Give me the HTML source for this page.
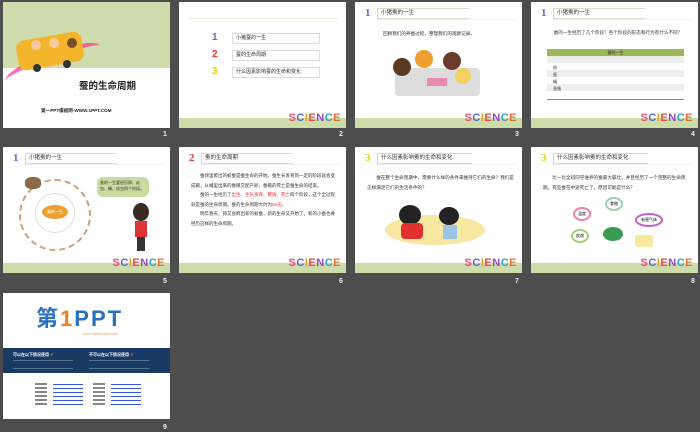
<!DOCTYPE html>
<html><head><meta charset="utf-8"><style>
*{margin:0;padding:0;box-sizing:border-box}
body{width:700px;height:432px;background:#4d4d4d;position:relative;overflow:hidden;font-family:"Liberation Sans","Noto Sans CJK SC",sans-serif}
.s{position:absolute;width:167px;height:126px;background:#fff;overflow:hidden}
.n{position:absolute;color:#eee;font-size:7px;font-weight:bold}
.band{position:absolute;left:0;bottom:0;width:100%;height:10px;background:#cddcaa}
.sci{position:absolute;right:5px;bottom:4px;font-size:11px;font-weight:bold;letter-spacing:0.5px;font-family:"Liberation Sans",sans-serif}
.tb{position:absolute;left:22px;top:6px;width:92px;height:11px;border:1px solid #dcdcc8;border-right:none;font-size:5.5px;line-height:9px;padding-left:3px;color:#333;background:#fff}
.tl{position:absolute;left:22px;top:17px;width:138px;height:1px;background:#eee}
.num{position:absolute;left:10px;top:5px;font-size:11px;font-weight:bold;font-family:"Liberation Serif",serif}
.t{position:absolute;font-size:4.6px;color:#333;line-height:9px}
</style></head><body>

<!-- slide 1 -->
<div class="s" style="left:3px;top:2px">
<div style="position:absolute;left:0;top:0;width:100%;height:66px;background:#cfdcae"></div>
<div style="position:absolute;left:0;top:50px;width:100px;height:22px;border-radius:50%;border-top:6px solid #f38;transform:rotate(-20deg);opacity:.7"></div>
<div style="position:absolute;left:14px;top:34px;width:66px;height:30px;background:#f3b52c;border-radius:8px;transform:rotate(-10deg)"></div>
<div style="position:absolute;left:28px;top:38px;width:10px;height:10px;background:#f8c9a0;border-radius:50%"></div>
<div style="position:absolute;left:46px;top:36px;width:10px;height:10px;background:#f8c9a0;border-radius:50%"></div>
<div style="position:absolute;left:64px;top:36px;width:10px;height:10px;background:#7b4a2a;border-radius:50%"></div>
<div style="position:absolute;left:30px;top:62px;width:8px;height:8px;background:#333;border-radius:50%"></div>
<div style="position:absolute;left:60px;top:58px;width:8px;height:8px;background:#333;border-radius:50%"></div>
<div style="position:absolute;left:76px;top:76px;font-size:9.5px;font-weight:bold;color:#222">蚕的生命周期</div>
<div style="position:absolute;left:38px;top:106px;font-size:4.6px;font-weight:bold;color:#222">第一PPT模板网-WWW.1PPT.COM</div>
</div>
<div class="n" style="left:163px;top:131px">1</div>

<!-- slide 2 -->
<div class="s" style="left:179px;top:2px">
<div style="position:absolute;left:9px;top:16px;width:150px;height:1px;background:#ececdf"></div>
<div style="position:absolute;left:33px;top:30px;font-size:10px;font-weight:bold;color:#6a5fd8">1</div>
<div style="position:absolute;left:33px;top:47px;font-size:10px;font-weight:bold;color:#e33">2</div>
<div style="position:absolute;left:33px;top:64px;font-size:10px;font-weight:bold;color:#ec0">3</div>
<div class="t" style="left:53px;top:31px;width:88px;height:11px;border:1px solid #ddd;padding-left:3px;line-height:9px;font-size:5px">小猪蚕的一生</div>
<div class="t" style="left:53px;top:48px;width:88px;height:11px;border:1px solid #ddd;padding-left:3px;line-height:9px;font-size:5px">蚕的生命周期</div>
<div class="t" style="left:53px;top:65px;width:88px;height:11px;border:1px solid #ddd;padding-left:3px;line-height:9px;font-size:5px">什么因素影响蚕的生命和变化</div>
<div class="band"></div>
<div class="sci"><span style="color:#e4527a">S</span><span style="color:#5b6ad0">C</span><span style="color:#e9a020">I</span><span style="color:#e05050">E</span><span style="color:#8a50c0">N</span><span style="color:#40a0c8">C</span><span style="color:#e07030">E</span></div>
</div>
<div class="n" style="left:339px;top:131px">2</div>

<!-- slide 3 -->
<div class="s" style="left:355px;top:2px">
<div class="num" style="color:#6a5fd8">1</div><div class="tb">小猪蚕的一生</div><div class="tl"></div>
<div class="t" style="left:28px;top:27px">回顾我们的养蚕过程，整理我们的观察记录。</div>
<div style="position:absolute;left:40px;top:66px;width:85px;height:28px;background:#ddd;border-radius:4px"></div>
<div style="position:absolute;left:38px;top:56px;width:18px;height:18px;background:#5b3a22;border-radius:50%"></div>
<div style="position:absolute;left:60px;top:48px;width:18px;height:18px;background:#f0a030;border-radius:50%"></div>
<div style="position:absolute;left:88px;top:50px;width:18px;height:18px;background:#6a3a2a;border-radius:50%"></div>
<div style="position:absolute;left:100px;top:66px;width:16px;height:16px;background:#f4d060;border-radius:50%"></div>
<div style="position:absolute;left:72px;top:76px;width:20px;height:8px;background:#e88ab0"></div>
<div class="band"></div>
<div class="sci"><span style="color:#e4527a">S</span><span style="color:#5b6ad0">C</span><span style="color:#e9a020">I</span><span style="color:#e05050">E</span><span style="color:#8a50c0">N</span><span style="color:#40a0c8">C</span><span style="color:#e07030">E</span></div>
</div>
<div class="n" style="left:515px;top:131px">3</div>

<!-- slide 4 -->
<div class="s" style="left:531px;top:2px">
<div class="num" style="color:#6a5fd8">1</div><div class="tb">小猪蚕的一生</div><div class="tl"></div>
<div class="t" style="left:18px;top:26px;width:145px">　蚕的一生经历了几个阶段？各个阶段的形态和行为有什么不同？</div>
<div style="position:absolute;left:16px;top:47px;width:137px;height:7px;background:#9bb858;font-size:4px;text-align:center;color:#222;line-height:7px">蚕的一生</div>
<div style="position:absolute;left:16px;top:54px;width:137px;height:7px;background:#eee"></div>
<div style="position:absolute;left:16px;top:68px;width:137px;height:7px;background:#eee"></div>
<div style="position:absolute;left:16px;top:82px;width:137px;height:7px;background:#eee"></div>
<div style="position:absolute;left:16px;top:97px;width:137px;height:1px;background:#888"></div>
<div class="t" style="left:22px;top:62px;line-height:7px;font-size:4px">卵<br>蚕<br>蛹<br>蚕蛾</div>
<div class="band"></div>
<div class="sci"><span style="color:#e4527a">S</span><span style="color:#5b6ad0">C</span><span style="color:#e9a020">I</span><span style="color:#e05050">E</span><span style="color:#8a50c0">N</span><span style="color:#40a0c8">C</span><span style="color:#e07030">E</span></div>
</div>
<div class="n" style="left:691px;top:131px">4</div>

<!-- slide 5 -->
<div class="s" style="left:3px;top:147px">
<div class="num" style="color:#6a5fd8">1</div><div class="tb">小猪蚕的一生</div><div class="tl"></div>
<div style="position:absolute;left:16px;top:32px;width:72px;height:72px;border:2px dashed #c9a27a;border-radius:50%"></div>
<div style="position:absolute;left:32px;top:46px;width:40px;height:40px;border:1px solid #ddd;border-radius:50%"></div>
<div style="position:absolute;left:39px;top:58px;width:26px;height:14px;background:#e8a030;border-radius:50%;font-size:4px;color:#fff;text-align:center;line-height:14px">蚕的一生</div>
<div style="position:absolute;left:22px;top:30px;width:16px;height:12px;background:#8a6a4a;border-radius:40%"></div>
<div style="position:absolute;left:94px;top:30px;width:52px;height:20px;background:#c9dca0;border-radius:6px;font-size:4px;line-height:6px;padding:3px;color:#333">蚕的一生要经历卵、幼虫、蛹、成虫四个阶段。</div>
<div style="position:absolute;left:130px;top:56px;width:16px;height:18px;background:#3a2a22;border-radius:50%"></div>
<div style="position:absolute;left:132px;top:74px;width:12px;height:16px;background:#d33"></div>
<div style="position:absolute;left:134px;top:90px;width:8px;height:14px;background:#333"></div>
<div class="band"></div>
<div class="sci"><span style="color:#e4527a">S</span><span style="color:#5b6ad0">C</span><span style="color:#e9a020">I</span><span style="color:#e05050">E</span><span style="color:#8a50c0">N</span><span style="color:#40a0c8">C</span><span style="color:#e07030">E</span></div>
</div>
<div class="n" style="left:163px;top:278px">5</div>

<!-- slide 6 -->
<div class="s" style="left:179px;top:147px">
<div class="num" style="color:#e33">2</div><div class="tb">蚕的生命周期</div><div class="tl"></div>
<div class="t" style="left:12px;top:24px;width:148px;line-height:9.5px;font-size:4.5px">　　蚕卵里孵出的蚁蚕是蚕生命的开始。蚕生长发育到一定的阶段就会变成蛾，从蛹里出来的蚕蛾交配产卵，蚕蛾的死亡是蚕生命的结束。<br>　　蚕的一生经历了<span style="color:#e33">出生、生长发育、繁殖、死亡</span>四个阶段，这个全过程就是蚕的生命周期。蚕的生命周期大约为<span style="color:#e33">56天</span>。<br>　　明年春天，卵又会孵出新的蚁蚕，新的生命又开始了。新的小蚕也要经历这样的生命周期。</div>
<div class="band"></div>
<div class="sci"><span style="color:#e4527a">S</span><span style="color:#5b6ad0">C</span><span style="color:#e9a020">I</span><span style="color:#e05050">E</span><span style="color:#8a50c0">N</span><span style="color:#40a0c8">C</span><span style="color:#e07030">E</span></div>
</div>
<div class="n" style="left:339px;top:278px">6</div>

<!-- slide 7 -->
<div class="s" style="left:355px;top:147px">
<div class="num" style="color:#ec0">3</div><div class="tb" style="width:95px">什么因素影响蚕的生命和变化</div><div class="tl"></div>
<div class="t" style="left:12px;top:26px;width:148px;line-height:10px">　　蚕在整个生命周期中，需要什么样的条件来维持它们的生命？我们是怎样满足它们的生活条件的？</div>
<div style="position:absolute;left:30px;top:68px;width:100px;height:30px;background:#f7e7a0;border-radius:50%"></div>
<div style="position:absolute;left:44px;top:58px;width:22px;height:20px;background:#222;border-radius:50%"></div>
<div style="position:absolute;left:46px;top:76px;width:22px;height:16px;background:#e03030;border-radius:4px"></div>
<div style="position:absolute;left:84px;top:60px;width:20px;height:18px;background:#222;border-radius:50%"></div>
<div style="position:absolute;left:88px;top:78px;width:14px;height:14px;background:#9bc4e4"></div>
<div class="band"></div>
<div class="sci"><span style="color:#e4527a">S</span><span style="color:#5b6ad0">C</span><span style="color:#e9a020">I</span><span style="color:#e05050">E</span><span style="color:#8a50c0">N</span><span style="color:#40a0c8">C</span><span style="color:#e07030">E</span></div>
</div>
<div class="n" style="left:515px;top:278px">7</div>

<!-- slide 8 -->
<div class="s" style="left:531px;top:147px">
<div class="num" style="color:#ec0">3</div><div class="tb" style="width:95px">什么因素影响蚕的生命和变化</div><div class="tl"></div>
<div class="t" style="left:12px;top:26px;width:150px;line-height:10px">　　比一比全班同学谁养的蚕最大最壮，并且经历了一个完整的生命周期。有些蚕在中途死亡了，原因可能是什么？</div>
<div style="position:absolute;left:42px;top:60px;width:18px;height:14px;border:2px solid #f080b0;border-radius:50%;font-size:4px;text-align:center;line-height:10px">温度</div>
<div style="position:absolute;left:74px;top:50px;width:18px;height:14px;border:2px solid #9cd0b0;border-radius:50%;font-size:4px;text-align:center;line-height:10px">食物</div>
<div style="position:absolute;left:104px;top:66px;width:28px;height:14px;border:2px solid #c060c0;border-radius:50%;font-size:4px;text-align:center;line-height:10px">有害气体</div>
<div style="position:absolute;left:40px;top:82px;width:18px;height:14px;border:2px solid #a0d070;border-radius:50%;font-size:4px;text-align:center;line-height:10px">疾病</div>
<div style="position:absolute;left:72px;top:80px;width:20px;height:14px;background:#3a9a50;border-radius:50%"></div>
<div style="position:absolute;left:104px;top:88px;width:18px;height:12px;background:#f8e8a0;border-radius:3px"></div>
<div class="band"></div>
<div class="sci"><span style="color:#e4527a">S</span><span style="color:#5b6ad0">C</span><span style="color:#e9a020">I</span><span style="color:#e05050">E</span><span style="color:#8a50c0">N</span><span style="color:#40a0c8">C</span><span style="color:#e07030">E</span></div>
</div>
<div class="n" style="left:691px;top:278px">8</div>

<!-- slide 9 -->
<div class="s" style="left:3px;top:293px">
<div style="position:absolute;left:33px;top:13px;font-size:22px;font-weight:bold;color:#2a70c0;letter-spacing:2px;line-height:26px">第<span style="color:#f08020">1</span>PPT</div>
<div style="position:absolute;left:80px;top:39px;font-size:3px;color:#f08020">HTTP://WWW.1PPT.COM</div>
<div style="position:absolute;left:0;top:55px;width:100%;height:25px;background:#1a3a66"></div>
<div style="position:absolute;left:10px;top:59px;font-size:4px;color:#fff;font-weight:bold">可以在以下情况使用 <span style="color:#6c3">✔</span></div>
<div style="position:absolute;left:86px;top:59px;font-size:4px;color:#fff;font-weight:bold">不可以在以下情况使用 <span style="color:#e33">✘</span></div>
<div style="position:absolute;left:10px;top:67px;width:60px;height:9px;border-top:1px solid #8aa;border-bottom:1px solid #8aa;opacity:.5"></div>
<div style="position:absolute;left:86px;top:67px;width:60px;height:9px;border-top:1px solid #8aa;border-bottom:1px solid #8aa;opacity:.5"></div>
<div style="position:absolute;left:32px;top:90px;width:12px;height:24px;background:repeating-linear-gradient(#888 0 2px,#fff 2px 4px)"></div>
<div style="position:absolute;left:50px;top:91px;width:30px;height:22px;background:repeating-linear-gradient(#3355dd 0 1px,#fff 1px 4px)"></div>
<div style="position:absolute;left:90px;top:90px;width:12px;height:24px;background:repeating-linear-gradient(#888 0 2px,#fff 2px 4px)"></div>
<div style="position:absolute;left:108px;top:91px;width:30px;height:22px;background:repeating-linear-gradient(#3355dd 0 1px,#fff 1px 4px)"></div>
</div>
<div class="n" style="left:163px;top:424px">9</div>
</body></html>
